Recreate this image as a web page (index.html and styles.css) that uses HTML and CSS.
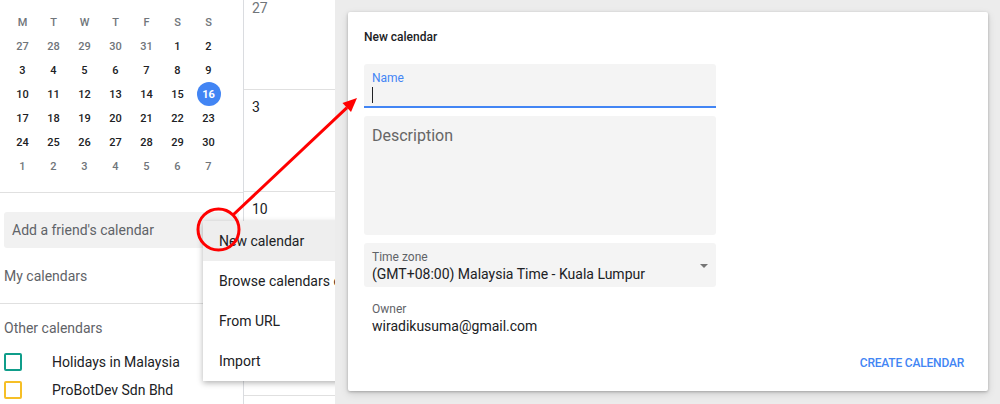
FILE: index.html
```html
<!DOCTYPE html>
<html lang="en">
<head>
<meta charset="utf-8">
<title>New calendar</title>
<link rel="stylesheet" href="styles.css">
</head>
<body>
<div class="app">
  <aside class="sidebar">
    <div class="minical">
      <span class="dow">M</span><span class="dow">T</span><span class="dow">W</span><span class="dow">T</span><span class="dow">F</span><span class="dow">S</span><span class="dow">S</span>
      <span class="d other">27</span><span class="d other">28</span><span class="d other">29</span><span class="d other">30</span><span class="d other">31</span><span class="d">1</span><span class="d">2</span>
      <span class="d">3</span><span class="d">4</span><span class="d">5</span><span class="d">6</span><span class="d">7</span><span class="d">8</span><span class="d">9</span>
      <span class="d">10</span><span class="d">11</span><span class="d">12</span><span class="d">13</span><span class="d">14</span><span class="d">15</span><span class="d"><span class="today">16</span></span>
      <span class="d">17</span><span class="d">18</span><span class="d">19</span><span class="d">20</span><span class="d">21</span><span class="d">22</span><span class="d">23</span>
      <span class="d">24</span><span class="d">25</span><span class="d">26</span><span class="d">27</span><span class="d">28</span><span class="d">29</span><span class="d">30</span>
      <span class="d other">1</span><span class="d other">2</span><span class="d other">3</span><span class="d other">4</span><span class="d other">5</span><span class="d other">6</span><span class="d other">7</span>
    </div>
    <div class="friend">Add a friend's calendar</div>
    <div class="section-my">My calendars</div>
    <div class="section-other">Other calendars</div>
    <div class="cal-item"><span class="box teal"></span>Holidays in Malaysia</div>
    <div class="cal-item"><span class="box yellow"></span>ProBotDev Sdn Bhd</div>
  </aside>

  <div class="daycol">
    <div class="cells">
      <div class="cell first"><span class="num prev">27</span></div>
      <div class="cell"><span class="num">3</span></div>
      <div class="cell"><span class="num">10</span></div>
      <div class="cell"></div>
    </div>
  </div>

  <div class="panel">
    <div class="card">
      <div class="card-title">New calendar</div>
      <div class="field name-field">
        <div class="label active">Name</div>
        <div class="input"><span class="caret"></span></div>
      </div>
      <div class="field desc-field">
        <div class="placeholder">Description</div>
      </div>
      <div class="field tz-field">
        <div class="tz-text">
          <div class="label">Time zone</div>
          <div class="value">(GMT+08:00) Malaysia Time - Kuala Lumpur</div>
        </div>
        <span class="dropdown"></span>
      </div>
      <div class="owner">
        <div class="label">Owner</div>
        <div class="value">wiradikusuma@gmail.com</div>
      </div>
      <div class="actions">
        <span class="btn">CREATE CALENDAR</span>
      </div>
    </div>
  </div>

  <div class="menu">
    <div class="menu-item hover">New calendar</div>
    <div class="menu-item">Browse calendars of interest</div>
    <div class="menu-item">From URL</div>
    <div class="menu-item">Import</div>
  </div>

  <svg class="annot" width="1000" height="404" viewBox="0 0 1000 404">
    <circle cx="218.5" cy="229.5" r="20.5" fill="none" stroke="#ff0000" stroke-width="3"/>
    <line x1="233" y1="215" x2="347" y2="107.6" stroke="#ff0000" stroke-width="3"/>
    <polygon points="357,98 351,112 342.5,103" fill="#ff0000"/>
  </svg>
</div>
</body>
</html>
```

FILE: styles.css
```css
html, body {
  margin: 0;
  padding: 0;
}

body {
  width: 1000px;
  height: 404px;
  overflow: hidden;
  background: #ffffff;
  font-family: Roboto, "Liberation Sans", Arial, sans-serif;
  color: #3c4043;
}

.app {
  position: relative;
  display: flex;
  width: 1000px;
  height: 404px;
  overflow: hidden;
}

/* ---------- sidebar ---------- */
.sidebar {
  width: 243px;
  flex: none;
  border-right: 1px solid #dadce0;
  display: flex;
  flex-direction: column;
}

.minical {
  display: grid;
  grid-template-columns: repeat(7, 31px);
  grid-auto-rows: 24px;
  padding: 10px 0 14px 7px;
  border-bottom: 1px solid #e0e0e0;
}

.dow,
.d {
  display: flex;
  align-items: center;
  justify-content: center;
  font-size: 11px;
  font-weight: 500;
}

.dow {
  color: #70757a;
}

.d {
  color: #202124;
}

.d.other {
  color: #70757a;
}

.today {
  width: 24px;
  height: 24px;
  border-radius: 50%;
  background: #4285f4;
  color: #ffffff;
  font-weight: 700;
  display: flex;
  align-items: center;
  justify-content: center;
}

.friend {
  margin: 19px 4px 0 4px;
  height: 36px;
  display: flex;
  align-items: center;
  padding-left: 8px;
  background: #f1f1f1;
  border-radius: 3px;
  font-size: 14px;
  color: #5f6368;
}

.section-my {
  height: 55px;
  display: flex;
  align-items: center;
  padding-left: 4px;
  font-size: 14px;
  color: #5f6368;
  border-bottom: 1px solid #e0e0e0;
}

.section-other {
  padding: 14px 0 10px 4px;
  line-height: 20px;
  font-size: 14px;
  color: #5f6368;
}

.cal-item {
  height: 28px;
  display: flex;
  align-items: center;
  padding-left: 4px;
  font-size: 14px;
  color: #202124;
}

.box {
  width: 14px;
  height: 14px;
  border: 2px solid;
  border-radius: 2px;
  margin-right: 30px;
  flex: none;
}

.box.teal {
  border-color: #0f9d8a;
}

.box.yellow {
  border-color: #f6bf26;
}

/* ---------- day column ---------- */
.daycol {
  width: 91px;
  flex: none;
}

.cells {
  margin-top: -12px;
}

.cell {
  height: 102px;
  box-sizing: border-box;
  border-bottom: 1px solid #e0e0e0;
  padding: 9px 0 0 8px;
}

.cell.first {
  padding-top: 12px;
}

.num {
  display: block;
  font-size: 14px;
  line-height: 16px;
  color: #202124;
}

.num.prev {
  color: #70757a;
}

/* ---------- panel ---------- */
.panel {
  position: relative;
  z-index: 2;
  flex: 1;
  background: #ececec;
  padding: 12px 12px 13px 13px;
  display: flex;
}

.card {
  flex: 1;
  background: #ffffff;
  border-radius: 2px;
  box-shadow: 0 1px 3px rgba(0, 0, 0, 0.25), 0 3px 8px rgba(0, 0, 0, 0.12);
  padding: 17px 16px 0 16px;
  display: flex;
  flex-direction: column;
}

.card-title {
  font-size: 12px;
  line-height: 16px;
  font-weight: 500;
  color: #202124;
}

.field {
  width: 352px;
  background: #f4f4f4;
  border-radius: 3px 3px 0 0;
  box-sizing: border-box;
  padding-left: 8px;
}

.name-field {
  margin-top: 19px;
  height: 44px;
  padding-top: 7px;
  border-bottom: 2px solid #4285f4;
}

.label {
  font-size: 12px;
  line-height: 14px;
  color: #5f6368;
}

.label.active {
  color: #4285f4;
}

.input {
  height: 16px;
  margin-top: 2px;
}

.caret {
  display: block;
  width: 1px;
  height: 16px;
  background: #202124;
}

.desc-field {
  margin-top: 8px;
  height: 119px;
  padding-top: 10px;
  border-radius: 3px;
}

.placeholder {
  font-size: 16px;
  line-height: 20px;
  color: #666666;
}

.tz-field {
  margin-top: 8px;
  height: 44px;
  padding-top: 7px;
  border-radius: 3px;
  display: flex;
  justify-content: space-between;
}

.value {
  margin-top: 2px;
  font-size: 14px;
  line-height: 16px;
  color: #202124;
}

.dropdown {
  align-self: center;
  margin-top: -6px;
  margin-right: 8px;
  width: 0;
  height: 0;
  border-left: 4px solid transparent;
  border-right: 4px solid transparent;
  border-top: 4px solid #757575;
}

.owner {
  margin-top: 15px;
  padding-left: 8px;
}

.actions {
  margin-top: 21px;
  display: flex;
  justify-content: flex-end;
}

.btn {
  padding: 0 8px;
  font-size: 12px;
  line-height: 16px;
  font-weight: 500;
  color: #4285f4;
  letter-spacing: -0.2px;
}

/* ---------- popup menu ---------- */
.menu {
  position: absolute;
  z-index: 1;
  left: 203px;
  top: 221px;
  width: 220px;
  background: #ffffff;
  box-shadow: 0 2px 6px rgba(0, 0, 0, 0.3);
}

.menu-item {
  height: 40px;
  display: flex;
  align-items: center;
  padding-left: 16px;
  font-size: 14px;
  color: #202124;
  white-space: nowrap;
}

.menu-item.hover {
  background: #eeeeee;
}

/* ---------- annotation ---------- */
.annot {
  position: absolute;
  z-index: 3;
  left: 0;
  top: 0;
  pointer-events: none;
}
```
